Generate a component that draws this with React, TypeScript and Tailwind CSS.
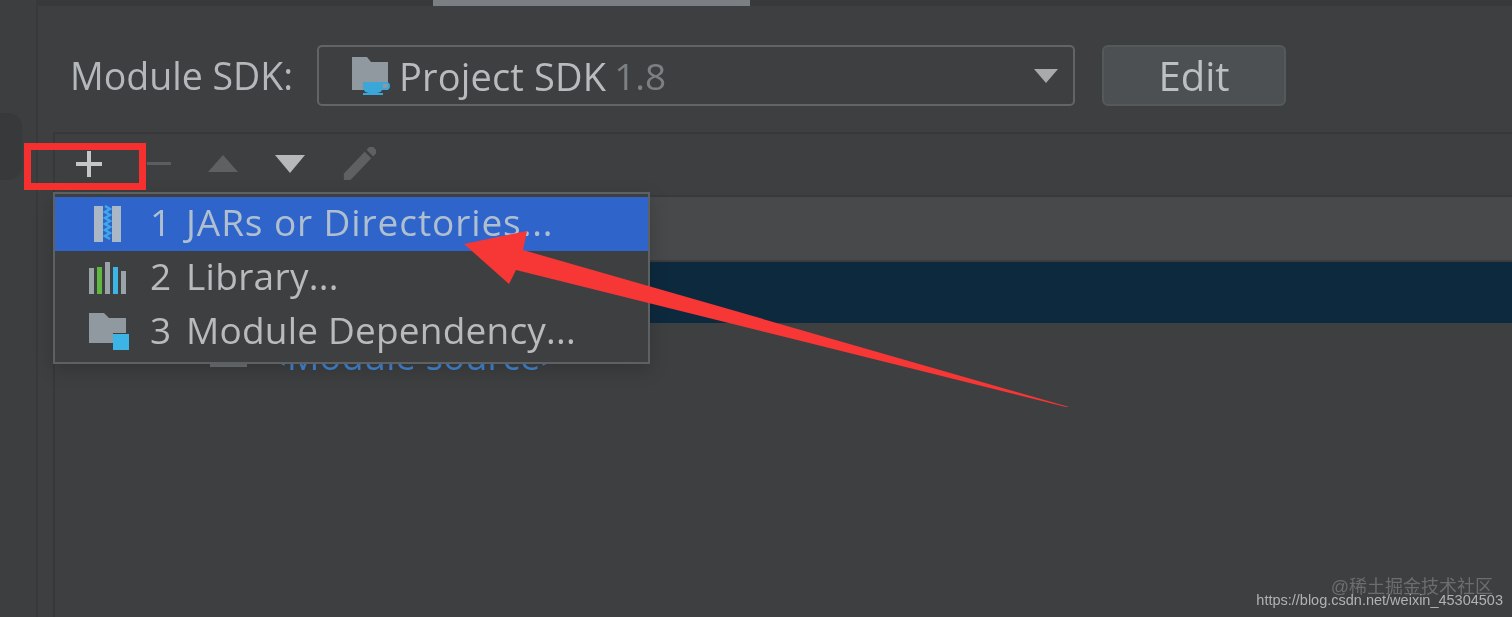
import React from "react";

const font = { fontFamily: '"Open Sans", "Noto Sans", sans-serif' };

function FolderCup() {
  return (
    <svg width="40" height="38" viewBox="0 0 40 38" className="shrink-0">
      <path d="M0 0h15l4 5h17v28H0z" fill="#8f999f" />
      <path d="M11 25h20v5a6 6 0 0 1-6 6h-8a6 6 0 0 1-6-6z" fill="#3ba6d8" />
      <path d="M31 26h3a3 3 0 0 1 0 6h-3" fill="none" stroke="#3ba6d8" strokeWidth="2" />
      <rect x="11" y="36" width="20" height="2" fill="#3ba6d8" />
    </svg>
  );
}

function ZipIcon() {
  return (
    <svg width="28" height="38" viewBox="0 0 28 38">
      <rect x="0" y="1" width="27" height="36" fill="#a9b7c6" />
      <rect x="9" y="1" width="9" height="36" fill="#2f65ca" />
      <path d="M11 1l5 3-5 3 5 3-5 3 5 3-5 3 5 3-5 3 5 3-5 3 5 3" fill="none" stroke="#3fa9e8" strokeWidth="2.5" />
    </svg>
  );
}

function LibIcon() {
  return (
    <svg width="38" height="33" viewBox="0 0 38 33">
      <rect x="0" y="6" width="5" height="26" fill="#9aa3a8" />
      <rect x="8" y="5" width="5" height="27" fill="#5fb83f" />
      <rect x="16" y="0" width="5" height="32" fill="#9aa3a8" />
      <rect x="24" y="5" width="5" height="27" fill="#3db4e6" />
      <rect x="32" y="9" width="5" height="23" fill="#9aa3a8" />
    </svg>
  );
}

function ModuleIcon() {
  return (
    <svg width="40" height="38" viewBox="0 0 40 38">
      <path d="M0 0h15l5 5h17v15H24v10H0z" fill="#8f999f" />
      <path d="M24 21h16v16H24z" fill="#3db4e6" />
    </svg>
  );
}

function MenuRow({ n, label, icon, active, iconClass, labelClass }: { n: string; label: string; icon: React.ReactNode; active?: boolean; iconClass: string; labelClass: string }) {
  return (
    <div className={`flex h-[54px] items-center text-[37px] leading-none ${active ? "bg-[#2f65ca] text-[#b0bfcf]" : "text-[#b8babc]"}`}>
      <div className={`flex w-[95px] shrink-0 ${iconClass}`}>{icon}</div>
      <span className="mb-[6px] w-[36px] shrink-0">{n}</span>
      <span className={`mb-[6px] ${labelClass}`}>{label}</span>
    </div>
  );
}

export default function App() {
  return (
    <div className="h-[617px] w-[1512px] overflow-hidden bg-[#3d3f41]">
      <div style={font} className="relative flex h-[617px] w-[1512px] overflow-hidden bg-[#3d3f41] blur-[0.6px]">
        <div className="relative w-[38px] shrink-0 border-r-2 border-[#37393b] bg-[#3c3e40]">
          <div className="absolute left-0 top-[113px] h-[67px] w-[22px] rounded-r-[14px] bg-[#37393a]" />
        </div>

        <div className="flex min-w-0 flex-1 flex-col">
          <div className="flex h-[6px] shrink-0 bg-[#38393b]">
            <div className="ml-[395px] h-[6px] w-[317px] bg-[#7b7f83]" />
          </div>

          <div className="mt-[39px] flex h-[61px] shrink-0 items-center pl-[32px]">
            <span className="w-[247px] shrink-0 text-[37.5px] leading-none text-[#b4b8bc]">Module SDK:</span>
            <div className="flex h-[61px] w-[758px] shrink-0 items-center rounded-[5px] border-2 border-[#626567] bg-[#3d3f41] pl-[33px]">
              <FolderCup />
              <span className="ml-[7px] text-[38px] leading-none tracking-[0.15px] text-[#b8bcbf]">Project SDK</span>
              <span className="ml-[8px] text-[37px] leading-none text-[#7c8082]">1.8</span>
              <svg width="24" height="14" viewBox="0 0 24 14" className="ml-auto mr-[15px]">
                <path d="M0 0h24L12 14z" fill="#a8aaac" />
              </svg>
            </div>
            <div className="ml-[27px] flex h-[61px] w-[184px] shrink-0 items-center justify-center rounded-[6px] border-2 border-[#54595b] bg-[#4c5052] text-[40px] leading-none text-[#bcc0c3]">
              Edit
            </div>
          </div>

          <div className="ml-[15px] mt-[26px] flex min-h-0 flex-1 flex-col border-l-2 border-t-2 border-[#373839]">
            <div className="flex h-[63px] shrink-0 items-center border-b-2 border-[#37393a] pb-[2px] pl-[21px]">
              <svg width="26" height="26" viewBox="0 0 26 26">
                <path d="M13 0v26M0 13h26" stroke="#c4c6c8" strokeWidth="4" />
              </svg>
              <svg width="24" height="4" viewBox="0 0 24 4" className="ml-[45px]">
                <rect width="24" height="3" fill="#5b5e60" />
              </svg>
              <svg width="30" height="17" viewBox="0 0 30 17" className="ml-[37px]">
                <path d="M15 0l15 17H0z" fill="#5e6062" />
              </svg>
              <svg width="30" height="18" viewBox="0 0 30 18" className="ml-[37px]">
                <path d="M0 0h30L15 18z" fill="#b6b8ba" />
              </svg>
              <svg width="34" height="34" viewBox="0 0 36 36" className="ml-[37px]">
                <path d="M2 28L24 5l7 7L9 35H2z" fill="#5e6062" />
                <path d="M26 3l3-3a3 3 0 0 1 4 0l3 3a3 3 0 0 1 0 4l-3 3z" fill="#5e6062" />
              </svg>
            </div>
            <div className="h-[65px] shrink-0 border-b-2 border-[#3a3c3e] bg-[#48494b]" />
            <div className="h-[61px] shrink-0 bg-[#0d293e]" />
            <div className="flex h-[76px] shrink-0 items-start pl-[155px]">
              <div className="mr-[19px] mt-[38px] h-[6px] w-[37px] bg-[#6d7073]" />
              <span className="mt-[16px] text-[36px] leading-none tracking-[0.3px] text-[#4285d2]">&lt;Module source&gt;</span>
            </div>
          </div>
        </div>

        <div className="absolute left-[53px] top-[192px] w-[597px] border-2 border-[#5e6163] bg-[#3d3f41] pb-[3px] pt-[3px] shadow-[0_6px_18px_rgba(0,0,0,0.18)]">
          <MenuRow n="1" label="JARs or Directories..." active icon={<ZipIcon />} iconClass="pl-[39px]" labelClass="tracking-[0.9px]" />
          <MenuRow n="2" label="Library..." icon={<LibIcon />} iconClass="pl-[34px]" labelClass="tracking-[0.3px]" />
          <MenuRow n="3" label="Module Dependency..." icon={<ModuleIcon />} iconClass="pl-[34px]" labelClass="tracking-[0.2px]" />
        </div>

        <div className="absolute left-[24px] top-[143px] h-[47px] w-[122px] border-[7px] border-[#f5302f]" />

        <svg className="pointer-events-none absolute left-0 top-0" width="1512" height="617" viewBox="0 0 1512 617">
          <path d="M1069 407L1066 407L516 270 509 284 464 244 527 231 523 250 Z" fill="#f73636" />
        </svg>

        <div className="absolute right-[19px] top-[578px] text-[18px] leading-none text-[#6b6d6f]" style={{ fontFamily: '"Liberation Sans", "Noto Sans CJK SC", sans-serif' }}>
          @稀土掘金技术社区
        </div>
        <div className="absolute right-[9px] top-[593px] text-[14.5px] leading-none text-[#b0b2b4]" style={{ fontFamily: '"Liberation Sans", sans-serif' }}>
          https://blog.csdn.net/weixin_45304503
        </div>
      </div>
    </div>
  );
}
